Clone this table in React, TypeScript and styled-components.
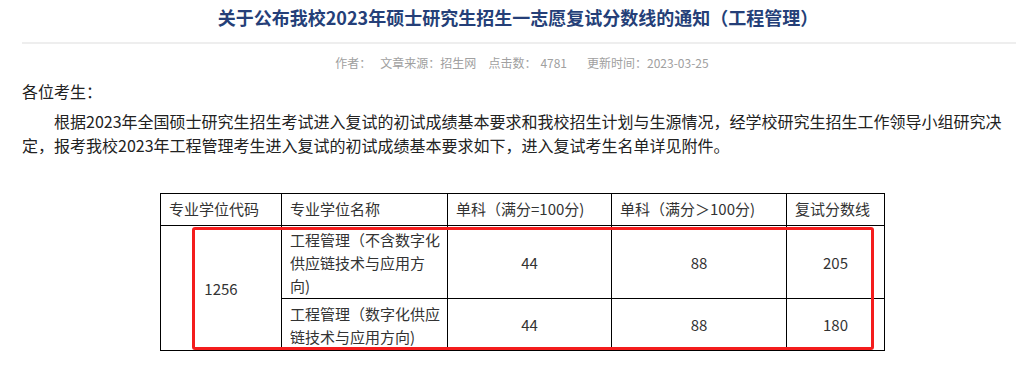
import styled, { createGlobalStyle } from 'styled-components';

const GlobalStyle = createGlobalStyle`
  html, body {
    margin: 0;
    padding: 0;
    background: #fff;
    overflow: hidden;
  }
  body {
    font-family: "Noto Sans CJK SC", "Microsoft YaHei", sans-serif;
    color: #333;
  }
`;

const Page = styled.div`
  width: 1000px;
  margin-left: 22px;
`;

const Title = styled.h1`
  margin: 0;
  padding: 4px 8px 0 0;
  font-size: 18px;
  line-height: 26px;
  font-weight: 700;
  color: #253f78;
  text-align: center;
`;

const Rule = styled.div`
  height: 2px;
  margin-top: 12px;
  background: #eeeeee;
`;

const Meta = styled.div`
  margin-top: 9px;
  font-size: 12px;
  line-height: 20px;
  color: #a0a0a0;
  text-align: center;
`;

const MetaItem = styled.span<{ $gap?: number }>`
  margin-right: ${p => p.$gap ?? 10}px;
  &:last-child {
    margin-right: 0;
  }
`;

const Body = styled.div`
  margin-top: 6px;
  padding-right: 16px;
  font-size: 16px;
  line-height: 24px;
  color: #222;
`;

const Para = styled.p<{ $indent?: boolean }>`
  margin: 0 0 6px;
  text-indent: ${p => (p.$indent ? '2em' : '0')};
`;

const TableWrap = styled.div`
  position: relative;
  width: 724px;
  margin: 36px 0 0 138px;
`;

const Table = styled.table`
  width: 724px;
  table-layout: fixed;
  border-collapse: collapse;
  font-size: 15px;
  line-height: 23px;
  color: #333;
`;

const Th = styled.th`
  border: 1px solid #000;
  padding: 2px 4px 5px 8px;
  font-weight: 400;
  text-align: left;
  vertical-align: middle;
  white-space: nowrap;
`;

const Td = styled.td<{ $align?: 'left' | 'center' }>`
  border: 1px solid #000;
  padding: ${p => (p.$align === 'left' ? '1px 2px 1px 8px' : '1px 4px')};
  text-align: ${p => p.$align ?? 'center'};
  vertical-align: middle;
`;

const HeadRow = styled.tr`
  height: 32px;
`;

const DataRow = styled.tr<{ $h: number }>`
  height: ${p => p.$h}px;
`;

const Highlight = styled.div`
  position: absolute;
  left: 32px;
  top: 34px;
  width: 682px;
  height: 123px;
  box-sizing: border-box;
  border: 3px solid #f41d1d;
  border-radius: 3px;
  pointer-events: none;
`;

const cols = [121, 166, 164, 175, 98];

export default function App() {
  return (
    <>
      <GlobalStyle />
      <Page>
        <Title>关于公布我校2023年硕士研究生招生一志愿复试分数线的通知（工程管理）</Title>
        <Rule />
        <Meta>
          <MetaItem $gap={9}>作者：</MetaItem>
          <MetaItem $gap={12}>文章来源：招生网</MetaItem>
          <MetaItem $gap={4}>点击数：</MetaItem>
          <MetaItem $gap={20}>4781</MetaItem>
          <MetaItem>更新时间：2023-03-25</MetaItem>
        </Meta>
        <Body>
          <Para>各位考生：</Para>
          <Para $indent>
            根据2023年全国硕士研究生招生考试进入复试的初试成绩基本要求和我校招生计划与生源情况，经学校研究生招生工作领导小组研究决定，报考我校2023年工程管理考生进入复试的初试成绩基本要求如下，进入复试考生名单详见附件。
          </Para>
        </Body>
        <TableWrap>
          <Table>
            <colgroup>
              {cols.map((w, i) => (
                <col key={i} style={{ width: w }} />
              ))}
            </colgroup>
            <tbody>
              <HeadRow>
                <Th>专业学位代码</Th>
                <Th>专业学位名称</Th>
                <Th>单科（满分=100分)</Th>
                <Th>单科（满分＞100分)</Th>
                <Th>复试分数线</Th>
              </HeadRow>
              <DataRow $h={73}>
                <Td rowSpan={2}>1256</Td>
                <Td $align="left">工程管理（不含数字化供应链技术与应用方向)</Td>
                <Td>44</Td>
                <Td>88</Td>
                <Td>205</Td>
              </DataRow>
              <DataRow $h={52}>
                <Td $align="left">工程管理（数字化供应链技术与应用方向)</Td>
                <Td>44</Td>
                <Td>88</Td>
                <Td>180</Td>
              </DataRow>
            </tbody>
          </Table>
          <Highlight />
        </TableWrap>
      </Page>
    </>
  );
}
